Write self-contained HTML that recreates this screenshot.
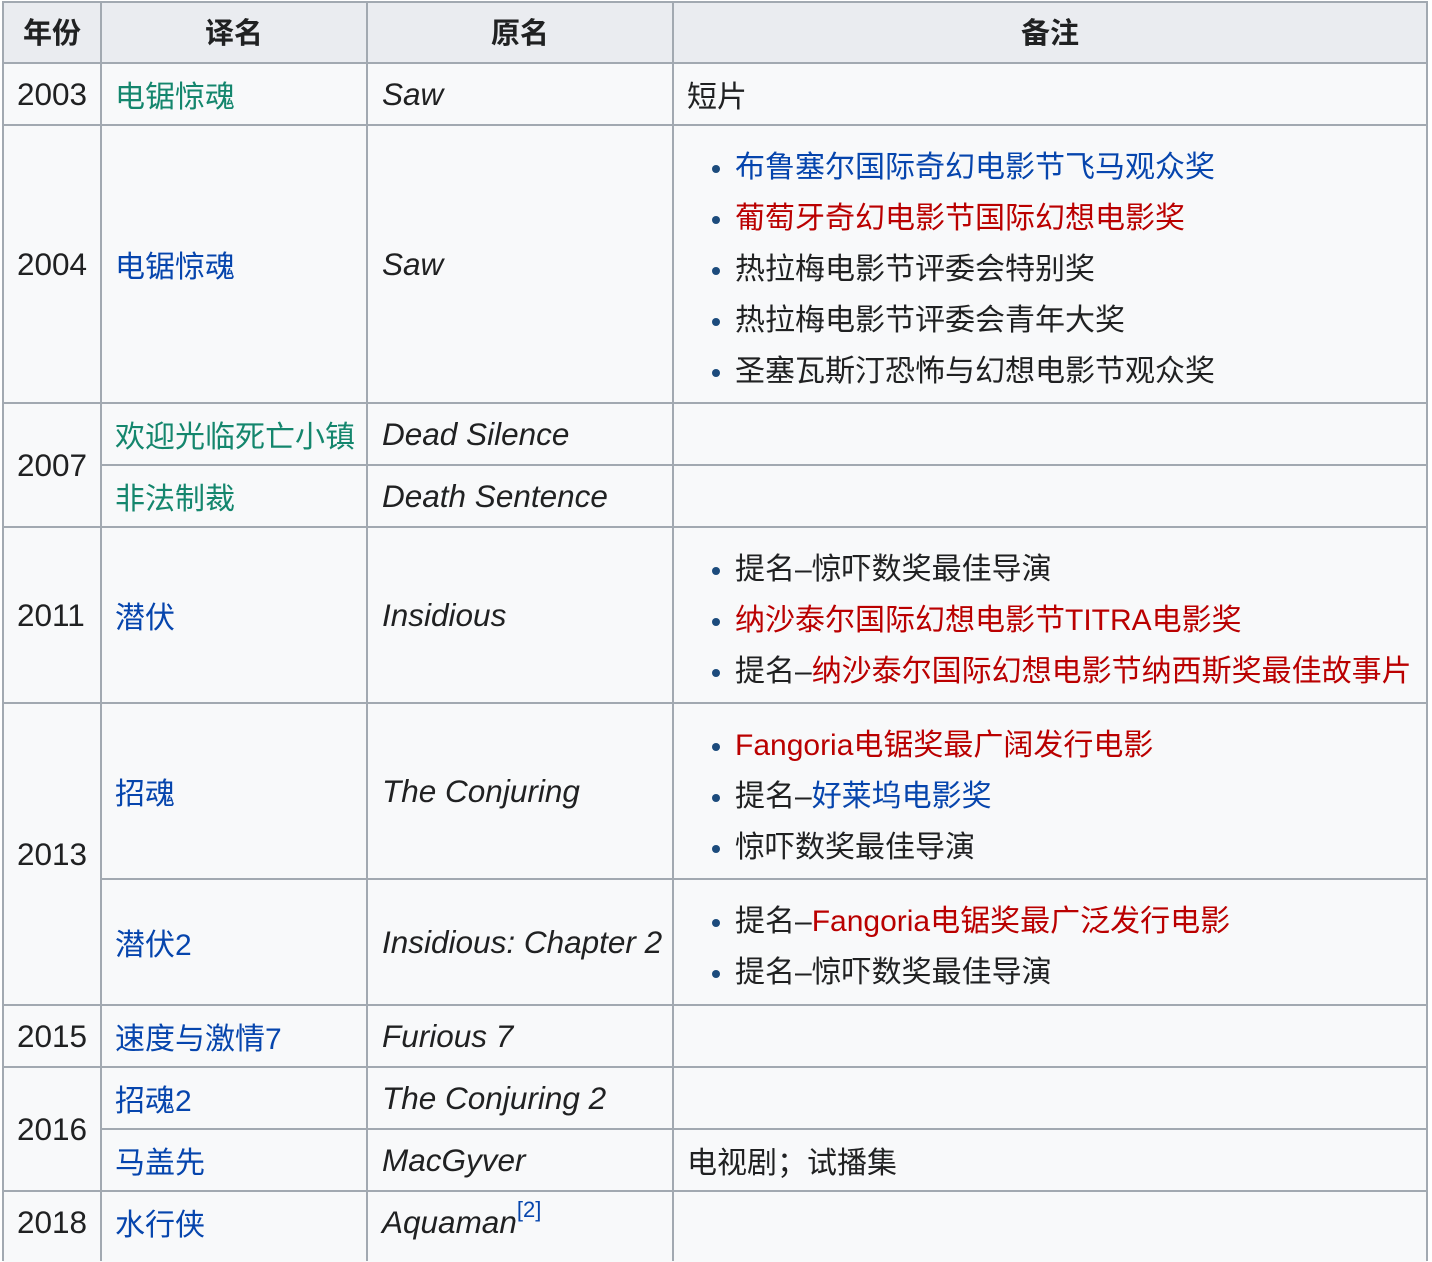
<!DOCTYPE html>
<html><head><meta charset="utf-8"><style>
body{margin:0;width:1432px;height:1250px;background:#fff;position:relative;overflow:hidden;font-family:"Liberation Sans","Noto Sans CJK SC",sans-serif;font-size:30px;color:#202122}
.bg{position:absolute;left:3px;top:2px;width:1424px;height:1260px;background:#f8f9fa}
.hd{position:absolute;left:3px;top:2px;width:1424px;height:61px;background:#eaecf0}
.v,.h{position:absolute;background:#a2a9b1}
.v{width:2px;top:1px;height:1260px}
.h{height:2px}
.c{position:absolute;display:flex;align-items:center;white-space:nowrap}
.y{font-size:31.5px}
.th{font-weight:bold;justify-content:center;font-size:29px}
.g{color:#14866d}.b{color:#0645ad}.r{color:#ba0000}
i{font-style:italic;font-size:31.5px}
ul{margin:0;padding:0;list-style:none;position:relative;top:5px}
li{line-height:51px;position:relative;padding-left:0}
li:before{content:"";position:absolute;left:-23px;top:23px;width:8px;height:8px;border-radius:50%;background:#1c4b7c}
sup{font-size:22px;vertical-align:0;position:relative;top:-12px}
</style></head><body>
<div class="bg"></div><div class="hd"></div>
<div class="v" style="left:2px"></div><div class="v" style="left:100px"></div><div class="v" style="left:366px"></div><div class="v" style="left:672px"></div><div class="v" style="left:1426px"></div>
<div class="h" style="left:2px;width:1426px;top:1px"></div>
<div class="h" style="left:2px;width:1426px;top:62px"></div>
<div class="h" style="left:2px;width:1426px;top:124px"></div>
<div class="h" style="left:2px;width:1426px;top:402px"></div>
<div class="h" style="left:100px;width:1328px;top:464px"></div>
<div class="h" style="left:2px;width:1426px;top:526px"></div>
<div class="h" style="left:2px;width:1426px;top:702px"></div>
<div class="h" style="left:100px;width:1328px;top:878px"></div>
<div class="h" style="left:2px;width:1426px;top:1004px"></div>
<div class="h" style="left:2px;width:1426px;top:1066px"></div>
<div class="h" style="left:100px;width:1328px;top:1128px"></div>
<div class="h" style="left:2px;width:1426px;top:1190px"></div>

<div class="c th" style="left:3px;top:0px;width:98px;height:61px">年份</div>
<div class="c th" style="left:101px;top:0px;width:266px;height:61px">译名</div>
<div class="c th" style="left:367px;top:0px;width:306px;height:61px">原名</div>
<div class="c th" style="left:673px;top:0px;width:754px;height:61px">备注</div>

<div class="c y" style="left:17px;top:63px;height:62px">2003</div>
<div class="c y" style="left:17px;top:125px;height:278px">2004</div>
<div class="c y" style="left:17px;top:403px;height:124px">2007</div>
<div class="c y" style="left:17px;top:527px;height:176px">2011</div>
<div class="c y" style="left:17px;top:703px;height:302px">2013</div>
<div class="c y" style="left:17px;top:1005px;height:62px">2015</div>
<div class="c y" style="left:17px;top:1067px;height:124px">2016</div>
<div class="c y" style="left:17px;top:1191px;height:62px">2018</div>

<div class="c g" style="left:115px;top:63px;height:62px">电锯惊魂</div>
<div class="c b" style="left:115px;top:125px;height:278px">电锯惊魂</div>
<div class="c g" style="left:115px;top:403px;height:62px">欢迎光临死亡小镇</div>
<div class="c g" style="left:115px;top:465px;height:62px">非法制裁</div>
<div class="c b" style="left:115px;top:527px;height:176px">潜伏</div>
<div class="c b" style="left:115px;top:703px;height:176px">招魂</div>
<div class="c b" style="left:115px;top:879px;height:126px">潜伏2</div>
<div class="c b" style="left:115px;top:1005px;height:62px">速度与激情7</div>
<div class="c b" style="left:115px;top:1067px;height:62px">招魂2</div>
<div class="c b" style="left:115px;top:1129px;height:62px">马盖先</div>
<div class="c b" style="left:115px;top:1191px;height:62px">水行侠</div>

<div class="c" style="left:382px;top:63px;height:62px"><i>Saw</i></div>
<div class="c" style="left:382px;top:125px;height:278px"><i>Saw</i></div>
<div class="c" style="left:382px;top:403px;height:62px"><i>Dead Silence</i></div>
<div class="c" style="left:382px;top:465px;height:62px"><i>Death Sentence</i></div>
<div class="c" style="left:382px;top:527px;height:176px"><i>Insidious</i></div>
<div class="c" style="left:382px;top:703px;height:176px"><i>The Conjuring</i></div>
<div class="c" style="left:382px;top:879px;height:126px"><i>Insidious: Chapter 2</i></div>
<div class="c" style="left:382px;top:1005px;height:62px"><i>Furious 7</i></div>
<div class="c" style="left:382px;top:1067px;height:62px"><i>The Conjuring 2</i></div>
<div class="c" style="left:382px;top:1129px;height:62px"><i>MacGyver</i></div>
<div class="c" style="left:382px;top:1191px;height:62px"><i>Aquaman</i><sup class="b">[2]</sup></div>

<div class="c" style="left:687px;top:63px;height:62px">短片</div>
<div class="c" style="left:735px;top:125px;height:278px"><ul>
<li class="b">布鲁塞尔国际奇幻电影节飞马观众奖</li>
<li class="r">葡萄牙奇幻电影节国际幻想电影奖</li>
<li>热拉梅电影节评委会特别奖</li>
<li>热拉梅电影节评委会青年大奖</li>
<li>圣塞瓦斯汀恐怖与幻想电影节观众奖</li></ul></div>
<div class="c" style="left:735px;top:527px;height:176px"><ul>
<li>提名–惊吓数奖最佳导演</li>
<li class="r">纳沙泰尔国际幻想电影节TITRA电影奖</li>
<li>提名–<span class="r">纳沙泰尔国际幻想电影节纳西斯奖最佳故事片</span></li></ul></div>
<div class="c" style="left:735px;top:703px;height:176px"><ul>
<li class="r">Fangoria电锯奖最广阔发行电影</li>
<li>提名–<span class="b">好莱坞电影奖</span></li>
<li>惊吓数奖最佳导演</li></ul></div>
<div class="c" style="left:735px;top:879px;height:126px"><ul>
<li>提名–<span class="r">Fangoria电锯奖最广泛发行电影</span></li>
<li>提名–惊吓数奖最佳导演</li></ul></div>
<div class="c" style="left:687px;top:1129px;height:62px">电视剧；试播集</div>
</body></html>
